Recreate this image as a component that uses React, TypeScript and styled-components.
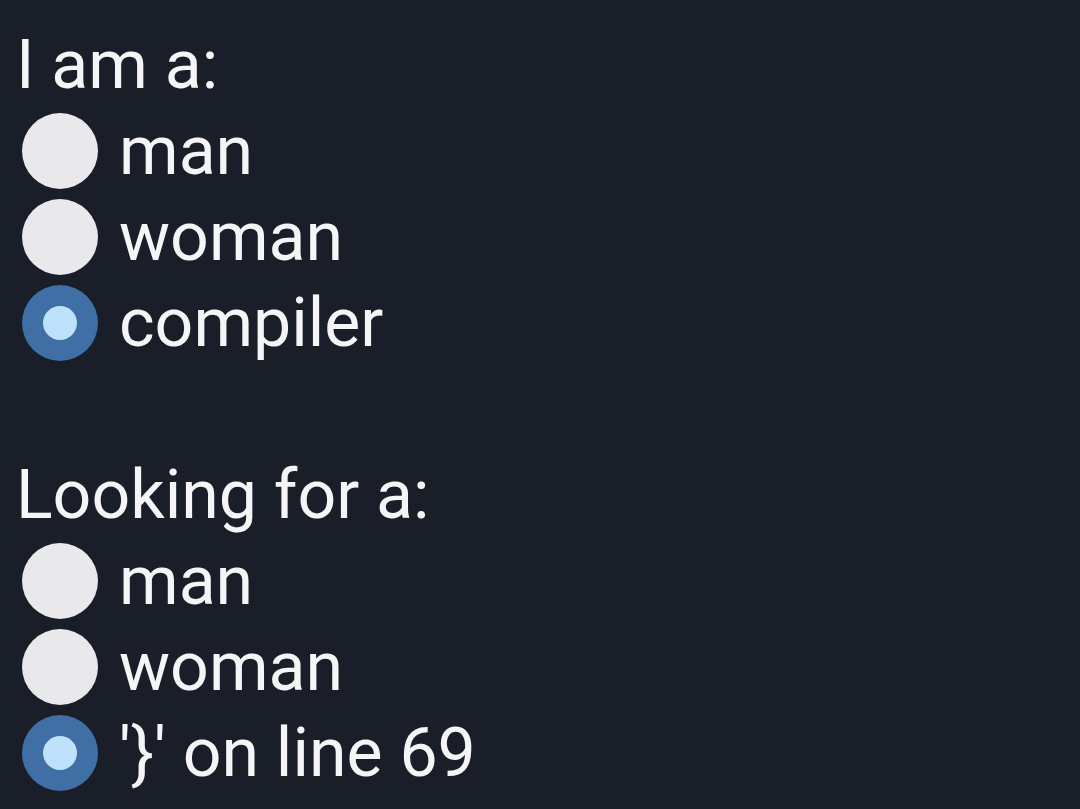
import styled, { createGlobalStyle } from "styled-components";

const Global = createGlobalStyle`
    html, body {
        margin:0;
        padding:0;
        background-color:#191e29;
    }
`;
const Page = styled.div`
    width:1080px;
    height:809px;
    box-sizing:border-box;
    padding:22px 0 0 16px;
    background-color:#191e29;
    color:#f5f5f5;
    font-family:Roboto, "Noto Sans", sans-serif;
    font-size:68px;
    line-height:86px;
    overflow:hidden;
`;
const Group = styled.div`
    display:flex;
    flex-direction:column;
    margin-bottom:86px;
`;
const Title = styled.div`
    height:86px;
`;
const Option = styled.label`
    display:flex;
    flex-direction:row;
    align-items:center;
    gap:21px;
    height:86px;
`;
const Radio = styled.span<Props>`
    width:76px;
    height:76px;
    margin-left:6px;
    border-radius:50%;
    flex-shrink:0;
    display:flex;
    justify-content:center;
    align-items:center;
    background-color:${(props)=>props.checked ? "#3f6fa5" : "#e9e9ec"};
    &::after{
        content:"";
        display:${(props)=>props.checked ? "block" : "none"};
        width:34px;
        height:34px;
        border-radius:50%;
        background-color:#bfe1fb;
    }
`;
interface Props {
    checked:boolean,
}
interface GroupData {
    title:string,
    options:string[],
    selected:number,
}

const groups:GroupData[] = [
    { title:"I am a:", options:["man","woman","compiler"], selected:2 },
    { title:"Looking for a:", options:["man","woman","'}' on line 69"], selected:2 },
];

const App = () => {
    return (
        <Page>
            <Global />
            {groups.map((g)=>(
                <Group key={g.title}>
                    <Title>{g.title}</Title>
                    {g.options.map((o,i)=>(
                        <Option key={o}>
                            <Radio checked={i===g.selected} />
                            <span>{o}</span>
                        </Option>
                    ))}
                </Group>
            ))}
        </Page>
    )
};

export default App;
